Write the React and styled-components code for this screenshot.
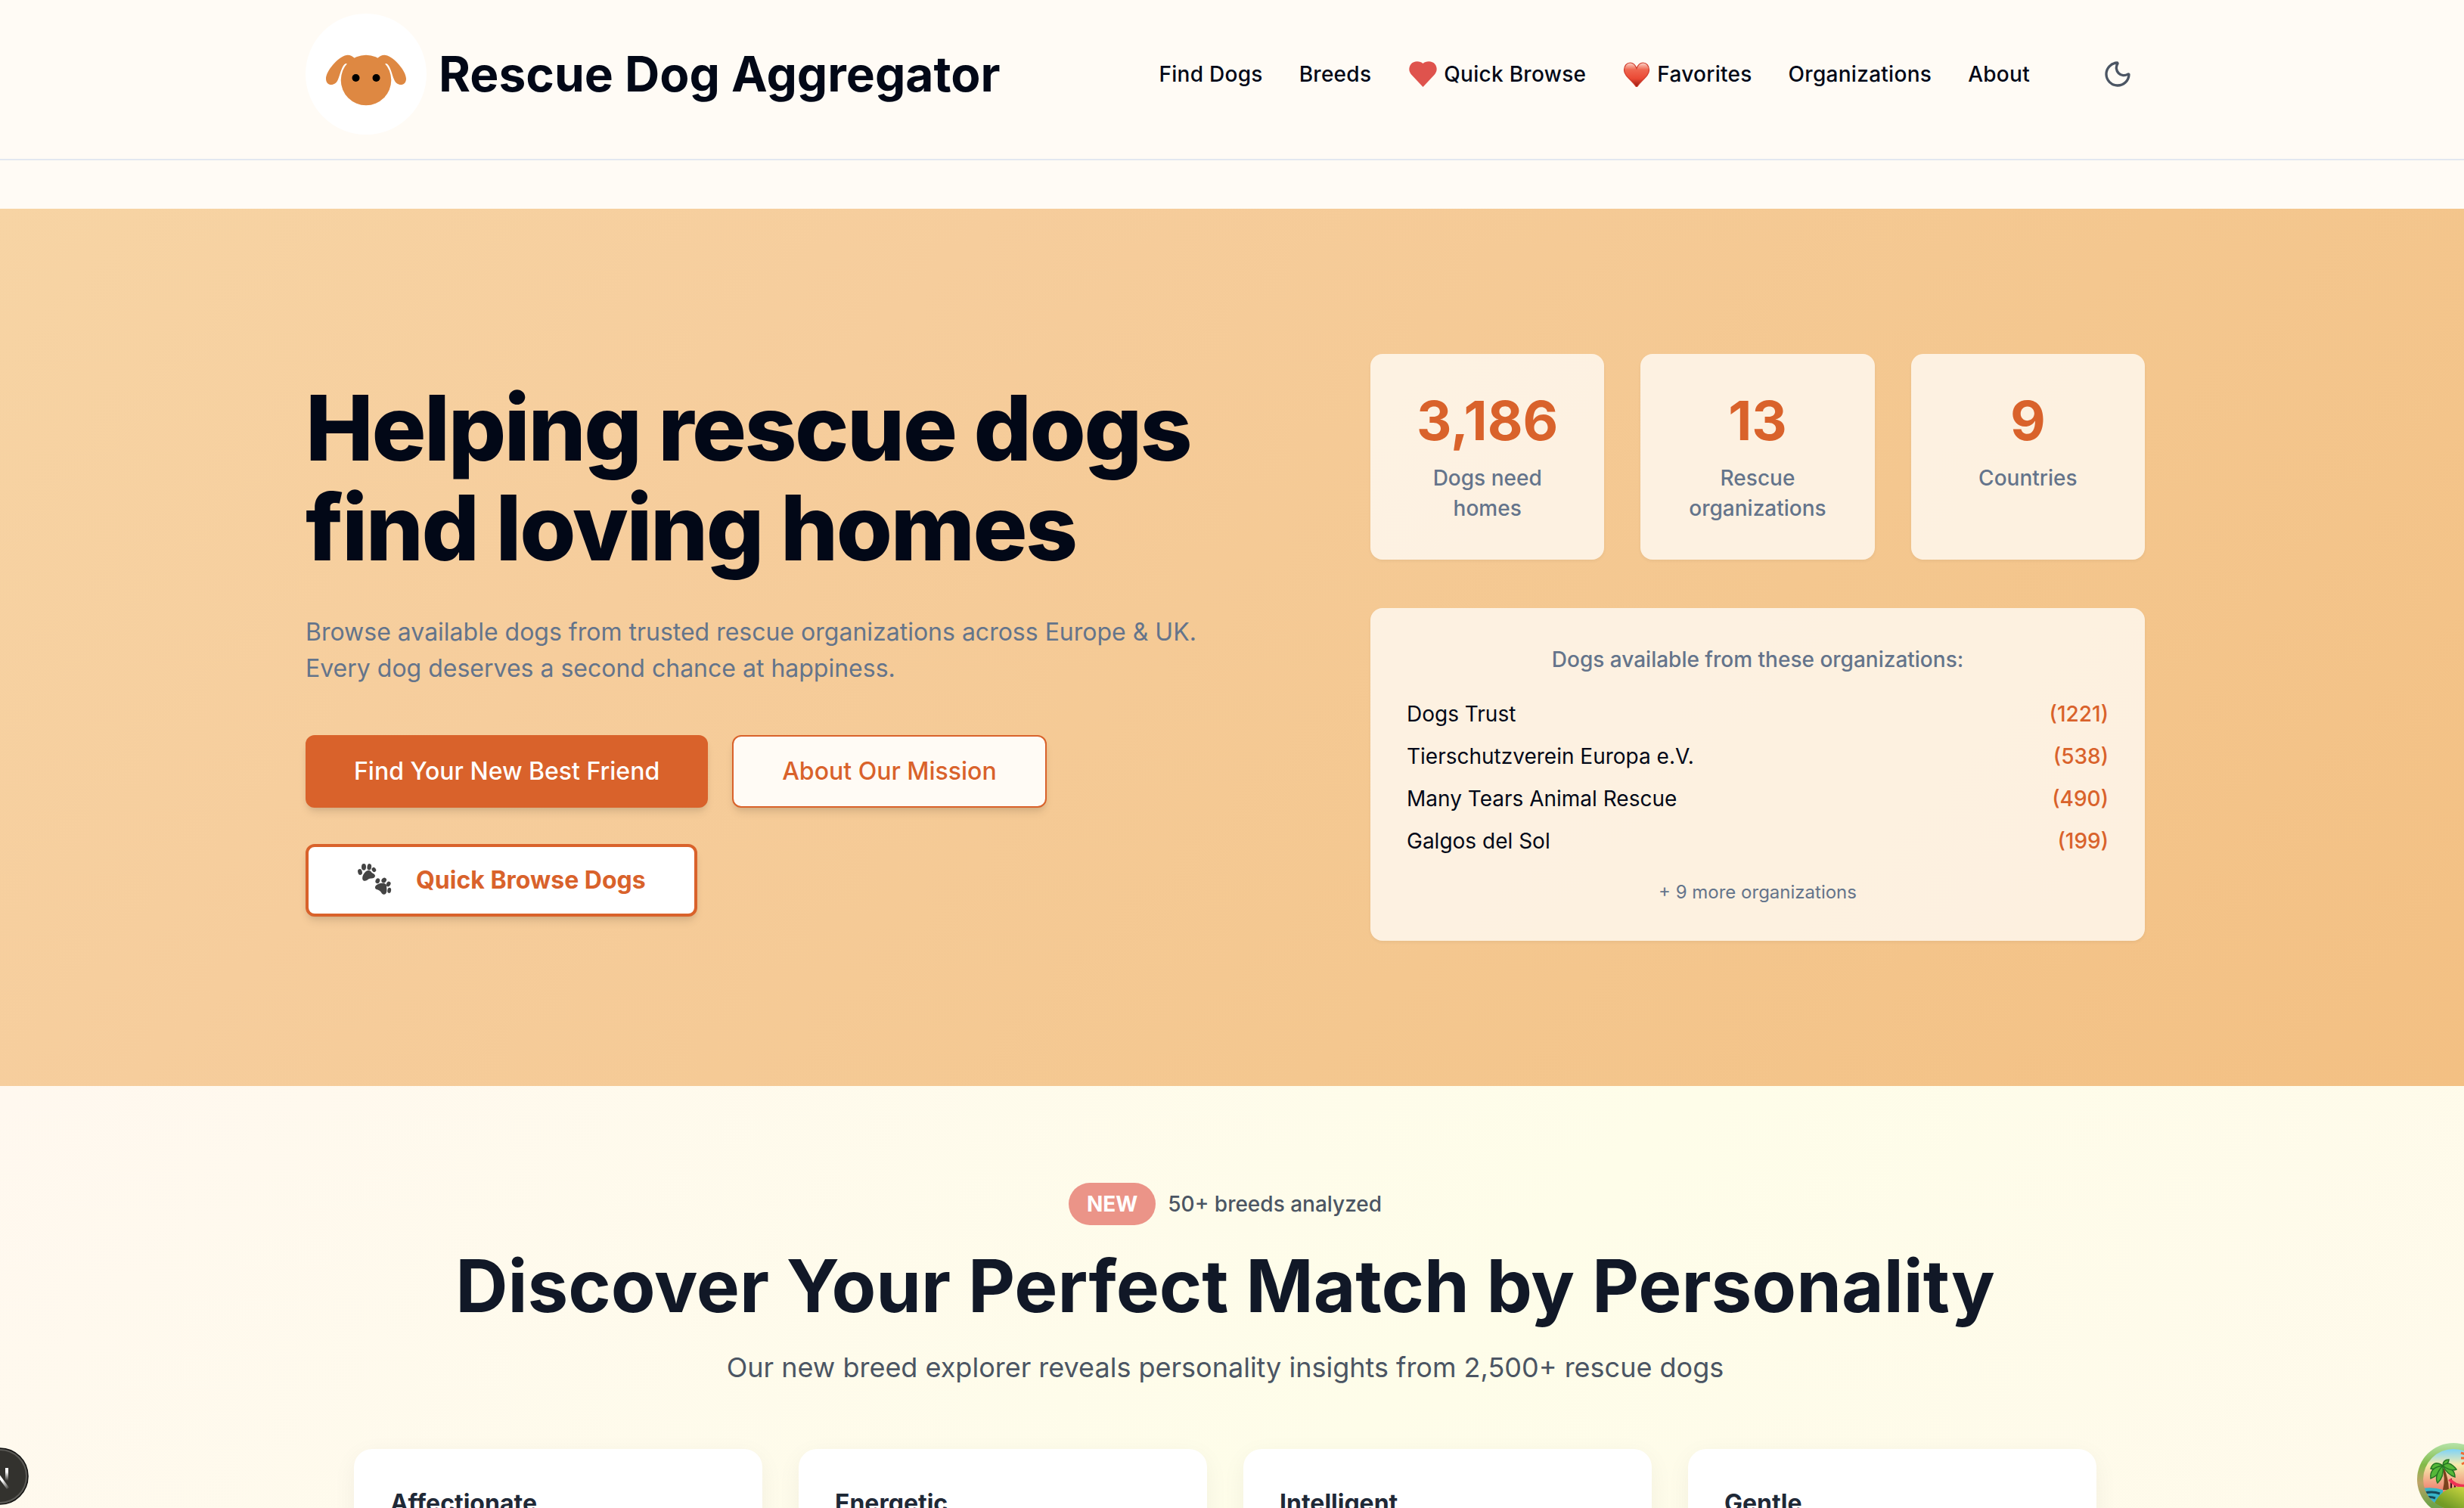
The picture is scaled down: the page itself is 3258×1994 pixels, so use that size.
import React from "react";
import styled, { createGlobalStyle } from "styled-components";
import { Moon } from "lucide-react";

const Global = createGlobalStyle`
  * { box-sizing: border-box; }
  body { margin: 0; background: #fffbf5; color: #020817; font-family: Inter, "Liberation Sans", sans-serif; font-size: 28px; line-height: 40px; }
  h1, h2, h3, p, ul { margin: 0; padding: 0; }
  a { color: inherit; text-decoration: none; }
  button { font: inherit; cursor: pointer; }
`;

const Page = styled.div`
  height: 100vh;
  overflow: hidden;
`;

const Container = styled.div`
  width: 100%;
  max-width: 2560px;
  margin: 0 auto;
  padding: 0 64px;
`;

const Header = styled.header`
  border-bottom: 2px solid #e2e8f0;
  padding-right: 18px;
`;

const HeaderBar = styled(Container)`
  display: flex;
  align-items: center;
  justify-content: space-between;
  height: 210px;
  padding-bottom: 14px;
`;

const Brand = styled.a`
  display: flex;
  align-items: center;
  gap: 16px;
  font-size: 64px;
  font-weight: 700;
  line-height: 72px;
`;

const Nav = styled.nav`
  display: flex;
  align-items: center;
  gap: 48px;
  font-weight: 500;
  letter-spacing: 0.01em;
`;

const NavLink = styled.a`
  display: flex;
  align-items: center;
  gap: 8px;
`;

const ThemeButton = styled.button`
  display: flex;
  align-items: center;
  justify-content: center;
  width: 72px;
  height: 72px;
  margin-left: 32px;
  padding: 0;
  border: 0;
  background: none;
  color: #4b5563;
`;

const Hero = styled.section`
  margin-top: 64px;
  padding: 192px 18px 192px 0;
  background: linear-gradient(135deg, #f7d4a4 0%, #f6cd9c 30%, #f4c78f 65%, #f3c083 100%);
`;

const HeroGrid = styled(Container)`
  display: grid;
  grid-template-columns: minmax(0, 1280fr) minmax(0, 1024fr);
  gap: 128px;
  align-items: center;
`;

const HeroTitle = styled.h1`
  font-size: 120px;
  font-weight: 800;
  line-height: 132px;
  letter-spacing: -0.02em;
`;

const HeroText = styled.p`
  max-width: 1200px;
  margin: 48px 0 64px;
  color: #64748b;
  font-size: 32px;
  line-height: 48px;
`;

const Actions = styled.div`
  display: flex;
  flex-wrap: wrap;
  gap: 48px 32px;
`;

const looks = {
  solid: "background: #d9622b; border: 2px solid #d9622b; color: #fff; font-weight: 500; padding: 0 62px;",
  outline: "background: #fffbf5; border: 2px solid #d9622b; color: #d9622b; font-weight: 500; padding: 0 64px;",
  strong: "background: #fff; border: 4px solid #d9622b; color: #d9622b; font-weight: 700; padding: 0 64px;",
};

const Action = styled.button`
  display: inline-flex;
  align-items: center;
  gap: 32px;
  height: 96px;
  border-radius: 12px;
  font-size: 32px;
  box-shadow: 0 8px 12px -2px rgba(0, 0, 0, 0.1), 0 4px 8px -4px rgba(0, 0, 0, 0.1);
  ${(p) => looks[p.$look]}
`;

const Side = styled.div`
  display: grid;
  gap: 64px;
`;

const Stats = styled.div`
  display: grid;
  grid-template-columns: repeat(3, 1fr);
  gap: 48px;
`;

const Panel = styled.div`
  padding: 48px;
  border-radius: 16px;
  background: rgba(255, 251, 245, 0.8);
  box-shadow: 0 2px 4px rgba(0, 0, 0, 0.05);
  text-align: center;
`;

const StatValue = styled.div`
  margin-bottom: 16px;
  color: #d9622b;
  font-size: 72px;
  font-weight: 700;
  line-height: 80px;
`;

const StatLabel = styled.div`
  color: #64748b;
  font-weight: 500;
`;

const OrgTitle = styled.p`
  margin-bottom: 32px;
  color: #64748b;
  font-weight: 500;
`;

const OrgList = styled.ul`
  display: grid;
  gap: 16px;
  list-style: none;
`;

const OrgRow = styled.li`
  display: flex;
  justify-content: space-between;
`;

const Count = styled.span`
  color: #d9622b;
  font-weight: 500;
`;

const More = styled.p`
  margin-top: 32px;
  color: #64748b;
  font-size: 24px;
  line-height: 32px;
`;

const Explore = styled.section`
  padding: 128px 18px 128px 0;
  background: linear-gradient(135deg, #fff8ef 0%, #fefde9 50%, #fff8ec 100%);
`;

const ExploreInner = styled(Container)`
  text-align: center;
`;

const Announcement = styled.div`
  display: flex;
  align-items: center;
  justify-content: center;
  gap: 16px;
  margin-bottom: 32px;
  color: #4b5563;
  font-weight: 500;
`;

const Badge = styled.span`
  padding: 8px 24px;
  border-radius: 28px;
  background: #eb9488;
  color: #fff;
  font-weight: 700;
`;

const ExploreTitle = styled.h2`
  color: #111827;
  font-size: 96px;
  font-weight: 700;
  line-height: 96px;
`;

const ExploreText = styled.p`
  margin: 32px 0 80px;
  color: #4b5563;
  font-size: 36px;
  line-height: 56px;
`;

const Traits = styled.div`
  display: grid;
  grid-template-columns: repeat(4, 1fr);
  gap: 48px;
  padding: 0 64px;
`;

const Trait = styled.article`
  height: 640px;
  padding: 48px;
  border-radius: 24px;
  background: #fff;
  box-shadow: 0 8px 32px rgba(0, 0, 0, 0.05);
  text-align: left;
`;

const TraitName = styled.h3`
  color: #1f2937;
  font-size: 32px;
  font-weight: 700;
  line-height: 48px;
`;

const DevBadge = styled.button`
  position: fixed;
  left: -38px;
  bottom: 4px;
  width: 76px;
  height: 76px;
  padding: 0;
  border: 0;
  background: none;
`;

const QueryBadge = styled(DevBadge)`
  left: auto;
  right: -34px;
  bottom: -10px;
  width: 96px;
  height: 96px;
`;

const Logo = () => (
  <svg width="160" height="160" viewBox="0 0 160 160" aria-hidden="true">
    <circle cx="80" cy="80" r="80" fill="#fff" />
    <g fill="#de8842">
      <circle cx="80" cy="88" r="33.300" />
      <path id="ear" d="M66 60Q60 54 54 55C43 57 27 76 27 86C27 97 40 96 43 87C46 80 48 68 53 66L62 68Z" />
      <path d="M94 60Q100 54 106 55C117 57 133 76 133 86C133 97 120 96 117 87C114 80 112 68 107 66L98 68Z" />
    </g>
    <circle cx="66.500" cy="85" r="5" />
    <circle cx="93.500" cy="85" r="5" />
  </svg>
);

const FlatHeart = () => (
  <svg width="40" height="36" viewBox="-2 -1 40 36" aria-hidden="true">
    <path d="M18.500 3C15-.5 6-1 2.500 4C-1 9 0 14 3.500 18L18.500 34L33.500 18C37 14 38 9 34.500 4C31-1 22-.5 18.500 3Z" fill="#df534d" />
  </svg>
);

const GlossyHeart = () => (
  <svg width="38" height="34" viewBox="-2 -1 38 34" aria-hidden="true">
    <defs>
      <linearGradient id="heart" x1="0" y1="0" x2="0" y2="1">
        <stop offset="0" stopColor="#fbd5ca" />
        <stop offset="0.28" stopColor="#ef6750" />
        <stop offset="0.65" stopColor="#ea4834" />
        <stop offset="1" stopColor="#8e160c" />
      </linearGradient>
    </defs>
    <path d="M17 8.500C15 3 12 1 8.500 1C4 1 .5 5 .5 10.500C.5 19 11 24 17 33.500C23 24 33.500 19 33.500 10.500C33.500 5 30 1 25.500 1C22 1 19 3 17 8.500Z" fill="url(#heart)" stroke="#cf3a2a" strokeWidth="1.200" />
  </svg>
);

const Paws = () => (
  <svg width="46" height="48" viewBox="0 0 46 48" fill="#444" aria-hidden="true">
    <path d="M11 13C14 10 18 11 19 13C20 15 24 15 24 18.500C23 22 19 21 16 22C13 24 11 26 8 24C6 21 8 16 11 13Z" />
    <ellipse cx="4" cy="13" rx="2.800" ry="4" transform="rotate(-15 4 13)" />
    <ellipse cx="9" cy="6.300" rx="3" ry="4.400" />
    <ellipse cx="16.300" cy="6.300" rx="2.800" ry="4.200" transform="rotate(8 16.300 6.300)" />
    <ellipse cx="22.400" cy="10" rx="2.600" ry="3.200" transform="rotate(-35 22.400 10)" />
    <path d="M28 29C32 27 38 27 39 31C39 34 40 37 39 40C38 43 35 43.500 33 41.500C31 38 29 37 26 36C23 35 23 31 28 29Z" />
    <ellipse cx="27.300" cy="24.700" rx="2.800" ry="3.500" transform="rotate(20 27.300 24.700)" />
    <ellipse cx="35.700" cy="24" rx="3" ry="3.600" transform="rotate(40 35.700 24)" />
    <ellipse cx="41.600" cy="29" rx="2.700" ry="3.500" transform="rotate(30 41.600 29)" />
    <ellipse cx="42.700" cy="37.300" rx="2.400" ry="3.600" transform="rotate(10 42.700 37.300)" />
  </svg>
);

const NextMark = () => (
  <svg width="76" height="76" viewBox="0 0 76 76" aria-hidden="true">
    <defs>
      <linearGradient id="stem" x1="0" y1="0" x2="0" y2="1">
        <stop offset="0.3" stopColor="#fff" />
        <stop offset="1" stopColor="#fff" stopOpacity="0" />
      </linearGradient>
      <linearGradient id="slash" x1="0" y1="0" x2="1" y2="1">
        <stop offset="0.6" stopColor="#fff" />
        <stop offset="1" stopColor="#fff" stopOpacity="0" />
      </linearGradient>
    </defs>
    <circle cx="38" cy="38" r="37" fill="#33322e" stroke="#111" strokeWidth="1.500" />
    <circle cx="38" cy="38" r="35" fill="none" stroke="#5b5a56" strokeWidth="2" />
    <path d="M45 27h4v17h-4Z" fill="url(#stem)" />
    <path d="M27 27h4L50 53l-3 2L31 33v16h-4Z" fill="url(#slash)" />
  </svg>
);

const Island = () => (
  <svg width="96" height="96" viewBox="0 0 96 96" aria-hidden="true">
    <defs>
      <linearGradient id="ring" x1="0" y1="0" x2="0" y2="1">
        <stop offset="0" stopColor="#b5e3a9" />
        <stop offset="0.3" stopColor="#82ba48" />
        <stop offset="0.55" stopColor="#c0a268" />
        <stop offset="0.85" stopColor="#70a449" />
      </linearGradient>
      <linearGradient id="sky" x1="0" y1="0" x2="0" y2="1">
        <stop offset="0.08" stopColor="#7bd3fa" />
        <stop offset="0.3" stopColor="#f6ecad" />
        <stop offset="0.65" stopColor="#ef8272" />
      </linearGradient>
      <linearGradient id="hill" x1="1" y1="0" x2="0" y2="1">
        <stop offset="0" stopColor="#eeee4b" />
        <stop offset="0.7" stopColor="#729b25" />
      </linearGradient>
      <clipPath id="disc"><circle cx="48" cy="48" r="40" /></clipPath>
    </defs>
    <circle cx="48" cy="48" r="48" fill="url(#ring)" />
    <g clipPath="url(#disc)">
      <path d="M0 0h96v96H0Z" fill="url(#sky)" />
      <path d="M0 61Q20 57 34 62V96H0Z" fill="#37b4c8" />
      <path d="M6 67q14-4 24 0M8 73q9-3 16 0" fill="none" stroke="#174859" strokeWidth="3" />
      <path d="M33 34q5 12 1 28h8q-1-17-6-28Z" fill="#7a421d" />
      <path d="M45 47v14M50 53v10" stroke="#3a1420" strokeWidth="2" />
      <path d="M43 48Q50 58 66 57" fill="none" stroke="#ed3155" strokeWidth="4" />
      <path d="M20 86Q31 57 58 58T92 86V96H20Z" fill="url(#hill)" />
      <g fill="#55b738" stroke="#247523" strokeWidth="1.500">
        <path d="M34 30Q34 22 42 22Q42 28 34 30Z" />
        <path d="M34 30Q22 22 18 34Q26 36 34 30Z" />
        <path d="M34 30Q16 32 18 47Q28 44 34 30Z" />
        <path d="M34 30Q22 43 27 53Q36 45 34 30Z" />
        <path d="M34 30Q40 42 50 45Q50 33 34 30Z" />
        <path d="M34 30Q42 22 52 35Q44 38 34 30Z" />
      </g>
      <path d="M58 13l6 2M58 20h8M59 28l6-3" stroke="#f26a32" strokeWidth="3" />
    </g>
  </svg>
);

const NAV = [
  { name: "Find Dogs" },
  { name: "Breeds" },
  { name: "Quick Browse", icon: <FlatHeart /> },
  { name: "Favorites", icon: <GlossyHeart /> },
  { name: "Organizations" },
  { name: "About" },
];
const STATS = [["3,186", "Dogs need homes"], ["13", "Rescue organizations"], ["9", "Countries"]];
const ORGS = [["Dogs Trust", 1221], ["Tierschutzverein Europa e.V.", 538], ["Many Tears Animal Rescue", 490], ["Galgos del Sol", 199]];
const TRAITS = ["Affectionate", "Energetic", "Intelligent", "Gentle"];

export default function App() {
  return (
    <Page>
      <Global />
      <Header>
        <HeaderBar>
          <Brand href="#"><Logo />Rescue Dog Aggregator</Brand>
          <Nav>
            {NAV.map((n) => <NavLink key={n.name} href="#">{n.icon}{n.name}</NavLink>)}
            <ThemeButton aria-label="Switch to dark mode"><Moon size={40} strokeWidth={2} /></ThemeButton>
          </Nav>
        </HeaderBar>
      </Header>
      <main>
        <Hero>
          <HeroGrid>
            <div>
              <HeroTitle>Helping rescue dogs find loving homes</HeroTitle>
              <HeroText>Browse available dogs from trusted rescue organizations across Europe &amp; UK. Every dog deserves a second chance at happiness.</HeroText>
              <Actions>
                <Action $look="solid">Find Your New Best Friend</Action>
                <Action $look="outline">About Our Mission</Action>
                <Action $look="strong"><Paws />Quick Browse Dogs</Action>
              </Actions>
            </div>
            <Side>
              <Stats>
                {STATS.map(([value, label]) => (
                  <Panel key={label}><StatValue>{value}</StatValue><StatLabel>{label}</StatLabel></Panel>
                ))}
              </Stats>
              <Panel>
                <OrgTitle>Dogs available from these organizations:</OrgTitle>
                <OrgList>
                  {ORGS.map(([name, count]) => (
                    <OrgRow key={name}><span>{name}</span><Count>({count})</Count></OrgRow>
                  ))}
                </OrgList>
                <More>+ 9 more organizations</More>
              </Panel>
            </Side>
          </HeroGrid>
        </Hero>
        <Explore>
          <ExploreInner>
            <Announcement><Badge>NEW</Badge>50+ breeds analyzed</Announcement>
            <ExploreTitle>Discover Your Perfect Match by Personality</ExploreTitle>
            <ExploreText>Our new breed explorer reveals personality insights from 2,500+ rescue dogs</ExploreText>
            <Traits>
              {TRAITS.map((t) => <Trait key={t}><TraitName>{t}</TraitName></Trait>)}
            </Traits>
          </ExploreInner>
        </Explore>
      </main>
      <DevBadge aria-label="Open developer tools"><NextMark /></DevBadge>
      <QueryBadge aria-label="Open query tools"><Island /></QueryBadge>
    </Page>
  );
}
